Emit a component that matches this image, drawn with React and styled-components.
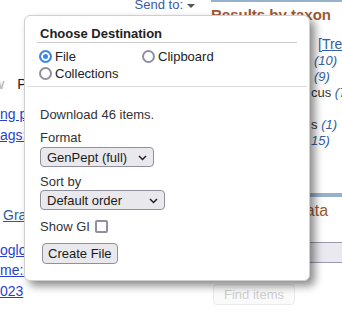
import React from 'react';
import styled, { createGlobalStyle } from 'styled-components';

const GlobalStyle = createGlobalStyle`
  html, body {
    margin: 0;
    padding: 0;
    background: #fff;
    overflow: hidden;
  }
  body {
    font-family: "Liberation Sans", Arial, sans-serif;
  }
`;

const Page = styled.div`
  position: relative;
  width: 342px;
  height: 315px;
  overflow: hidden;
  display: flex;
`;

/* ---- background page, left column ---- */

const LeftCol = styled.div`
  width: 211px;
  flex: none;
  display: flex;
  flex-direction: column;
  font-size: 14px;
  line-height: 20px;
`;

const SendBar = styled.div`
  display: flex;
  justify-content: flex-end;
  align-items: center;
  gap: 4px;
  padding-right: 16px;
  margin-top: -2px;
  font-size: 13px;
  line-height: 14px;
  color: #3a5b9f;
`;

const Caret = styled.span`
  width: 0;
  height: 0;
  border-left: 4px solid transparent;
  border-right: 4px solid transparent;
  border-top: 4px solid #555;
  margin-top: 2px;
`;

const ToolRow = styled.div`
  display: flex;
  gap: 13px;
  margin: 62px 0 0 -6px;
  color: #222;
`;

const Faint = styled.span`
  color: #aaa;
`;

const LinkLine = styled.a`
  display: block;
  margin-top: ${({ $gap }) => $gap || 0}px;
  padding-left: ${({ $indent }) => $indent || 0}px;
  color: ${({ $dark }) => ($dark ? '#2e5a9c' : '#2a3fd0')};
  text-decoration: underline;
  white-space: nowrap;
`;

/* ---- background page, right column ---- */

const RightCol = styled.div`
  flex: 1;
  display: flex;
  flex-direction: column;
`;

const BlueRule = styled.div`
  height: ${({ $h }) => $h}px;
  margin-top: ${({ $gap }) => $gap || 0}px;
  background: #97b1cb;
`;

const PortletTitle = styled.h3`
  margin: ${({ $gap }) => $gap}px 0 0 ${({ $shift }) => $shift || 0}px;
  font-size: ${({ $size }) => $size}px;
  line-height: 18px;
  font-weight: ${({ $bold }) => ($bold ? 700 : 400)};
  color: #9b5a34;
  white-space: nowrap;
`;

const TaxonLink = styled.a`
  display: block;
  margin: 12px 0 1px;
  padding-left: 107px;
  font-size: 14px;
  line-height: 16px;
  color: #3561a3;
  text-decoration: underline;
  white-space: nowrap;
`;

const TaxonLine = styled.div`
  height: 16px;
  padding-left: ${({ $indent }) => $indent}px;
  font-size: 13px;
  line-height: 16px;
  color: #333;
  white-space: nowrap;
`;

const Count = styled.em`
  color: #3561a3;
`;

const DbSelect = styled.div`
  height: 19px;
  margin-top: 22px;
  border-top: 1px solid #9a9aae;
  border-bottom: 1px solid #9a9aae;
  background: #e9e9ef;
`;

const FindButton = styled.button`
  align-self: flex-start;
  margin: 21px 0 0 2px;
  width: 82px;
  height: 21px;
  padding: 0;
  border: 1px solid #eaeaea;
  border-radius: 4px;
  background: #fafafa;
  color: #cfcfcf;
  font: 13px "Liberation Sans", Arial, sans-serif;
`;

/* ---- popup ---- */

const Popup = styled.div`
  position: absolute;
  left: 24px;
  top: 15px;
  width: 286px;
  height: 266px;
  box-sizing: border-box;
  border: 1px solid #cfcfcf;
  border-radius: 6px;
  background: #fff;
  box-shadow: 5px 5px 8px rgba(0, 0, 0, 0.45);
  display: flex;
  flex-direction: column;
  font-family: "Liberation Sans", Arial, sans-serif;
  font-size: 13px;
  color: #333;
`;

const DestSection = styled.div`
  padding: 0 12px 3px;
`;

const DestTitle = styled.div`
  margin-top: 10px;
  padding: 0 3px 1px;
  border-bottom: 1px solid #cccccc;
  font-weight: 700;
  line-height: 15px;
  color: #222;
`;

const RadioGrid = styled.div`
  display: grid;
  grid-template-columns: 103px 1fr;
  grid-auto-rows: 17px;
  margin-top: 5px;
  padding-left: 2px;
`;

const RadioLabel = styled.label`
  display: flex;
  align-items: center;
  gap: 3px;
  line-height: 15px;
  color: #222;
`;

const Radio = styled.input.attrs({ type: 'radio' })`
  appearance: none;
  margin: 0;
  width: 13px;
  height: 13px;
  box-sizing: border-box;
  border-radius: 50%;
  border: 2px solid #8f8f9d;
  background: #fff;

  &:checked {
    border-color: #3d86e6;
    background: #3d86e6;
    box-shadow: inset 0 0 0 2px #fff;
  }
`;

const Divider = styled.hr`
  margin: 1px 2px 0;
  border: 0;
  border-top: 1px solid #dddddd;
`;

const Body = styled.div`
  display: flex;
  flex-direction: column;
  align-items: flex-start;
  padding: 20px 0 0 15px;
  line-height: 15px;
`;

const FieldLabel = styled.div`
  margin-top: ${({ $gap }) => $gap || 0}px;
`;

const SelectWrap = styled.div`
  position: relative;
  width: ${({ $w }) => $w}px;
  margin-top: ${({ $gap }) => $gap}px;
`;

const Select = styled.select`
  appearance: none;
  display: block;
  width: 100%;
  height: 20px;
  box-sizing: border-box;
  margin: 0;
  padding: 0 0 0 6px;
  border: 1px solid #8f8f9d;
  border-radius: 4px;
  background: #e9e9ed;
  color: #1b1b1b;
  font: 13px "Liberation Sans", Arial, sans-serif;
`;

const Chevron = styled.svg`
  position: absolute;
  right: 7px;
  top: 8px;
  pointer-events: none;
`;

const CheckRow = styled.label`
  display: flex;
  align-items: center;
  gap: 5px;
  margin-top: 9px;
`;

const Checkbox = styled.input.attrs({ type: 'checkbox' })`
  appearance: none;
  margin: 0;
  width: 13px;
  height: 13px;
  box-sizing: border-box;
  border: 2px solid #8f8f9d;
  border-radius: 2px;
  background: #fff;
`;

const CreateButton = styled.button`
  margin: 9px 0 0 2px;
  height: 21px;
  padding: 0 5px;
  border: 1px solid #8f8f9d;
  border-radius: 4px;
  background: #e9e9ed;
  color: #1b1b1b;
  font: 13px "Liberation Sans", Arial, sans-serif;
`;

function DropDown({ width, gap, options }) {
  return (
    <SelectWrap $w={width} $gap={gap}>
      <Select defaultValue={options[0]}>
        {options.map((o) => (
          <option key={o}>{o}</option>
        ))}
      </Select>
      <Chevron width="9" height="6" viewBox="0 0 9 6">
        <path d="M1 1l3.5 3.5L8 1" fill="none" stroke="#222" strokeWidth="1.5" />
      </Chevron>
    </SelectWrap>
  );
}

export default function App() {
  return (
    <Page>
      <GlobalStyle />
      <LeftCol>
        <SendBar>
          Send to:
          <Caret />
        </SendBar>
        <ToolRow>
          <Faint>w</Faint>
          <span>Per page</span>
        </ToolRow>
        <LinkLine $gap={10}>ng protein [Staphylococcus aureus]</LinkLine>
        <LinkLine $gap={1}>ags: WP_000123456</LinkLine>
        <LinkLine $gap={60} $indent={3} $dark>Graphics</LinkLine>
        <LinkLine $gap={15}>oglobin-binding protein</LinkLine>
        <LinkLine>me: Staphylococcus aureus</LinkLine>
        <LinkLine $gap={1}>023</LinkLine>
      </LeftCol>
      <RightCol>
        <BlueRule $h={2} />
        <PortletTitle $gap={4} $size={15} $bold>
          Results by taxon
        </PortletTitle>
        <TaxonLink>[Tree]</TaxonLink>
        <TaxonLine $indent={103}>
          <Count>(10)</Count>
        </TaxonLine>
        <TaxonLine $indent={103}>
          <Count>(9)</Count>
        </TaxonLine>
        <TaxonLine $indent={100}>
          cus <Count>(7)</Count>
        </TaxonLine>
        <TaxonLine $indent={100} />
        <TaxonLine $indent={100}>
          s <Count>(1)</Count>
        </TaxonLine>
        <TaxonLine $indent={100}>
          <Count>15)</Count>
        </TaxonLine>
        <BlueRule $h={4} $gap={44} />
        <PortletTitle $gap={5} $size={16} $shift={-3}>
          Find related data
        </PortletTitle>
        <DbSelect />
        <FindButton disabled>Find items</FindButton>
      </RightCol>

      <Popup>
        <DestSection>
          <DestTitle>Choose Destination</DestTitle>
          <RadioGrid>
            <RadioLabel>
              <Radio name="dest" defaultChecked />
              File
            </RadioLabel>
            <RadioLabel>
              <Radio name="dest" />
              Clipboard
            </RadioLabel>
            <RadioLabel>
              <Radio name="dest" />
              Collections
            </RadioLabel>
          </RadioGrid>
        </DestSection>
        <Divider />
        <Body>
          <div>Download 46 items.</div>
          <FieldLabel $gap={8}>Format</FieldLabel>
          <DropDown width={114} gap={2} options={['GenPept (full)', 'FASTA']} />
          <FieldLabel $gap={7}>Sort by</FieldLabel>
          <DropDown width={125} gap={1} options={['Default order', 'Accession']} />
          <CheckRow>
            Show GI
            <Checkbox />
          </CheckRow>
          <CreateButton>Create File</CreateButton>
        </Body>
      </Popup>
    </Page>
  );
}
